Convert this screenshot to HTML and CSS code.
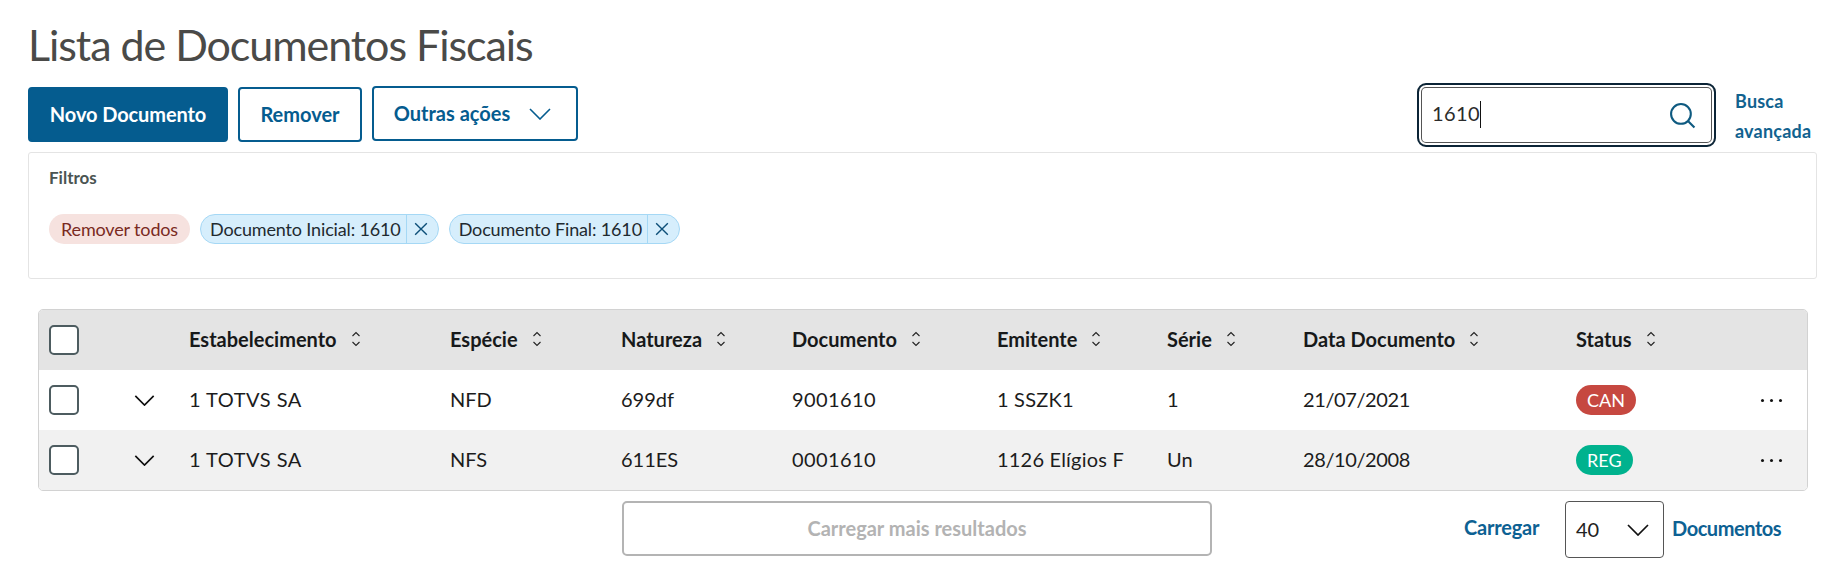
FILE: index.html
```html
<!DOCTYPE html>
<html lang="pt-BR">
<head>
<meta charset="utf-8">
<title>Lista de Documentos Fiscais</title>
<link rel="stylesheet" href="styles.css">
</head>
<body>
<main class="page">
  <h1 class="title">Lista de Documentos Fiscais</h1>
  <div class="toolbar">
    <div class="actions">
      <button class="btn btn-primary">Novo Documento</button>
      <button class="btn btn-outline">Remover</button>
      <button class="btn btn-outline btn-more"><span>Outras ações</span>
        <svg class="chev-blue" viewBox="0 0 22 12"><path d="M1 1l10 10L21 1"/></svg>
      </button>
    </div>
    <div class="search-area">
      <div class="search">
        <span class="search-value">1610</span><span class="caret"></span>
        <svg class="search-icon" viewBox="0 0 26 26"><circle cx="11.5" cy="11.5" r="9.5"/><path d="M18.5 18.5l6 6"/></svg>
      </div>
      <a class="advanced">Busca<br>avançada</a>
    </div>
  </div>
  <section class="filters">
    <div class="filters-label">Filtros</div>
    <div class="chips">
      <span class="chip chip-clear">Remover todos</span>
      <span class="chip chip-filter"><span class="chip-text">Documento Inicial: 1610</span><span class="chip-close"><svg viewBox="0 0 12 12"><path d="M1 1l10 10M11 1L1 11"/></svg></span></span>
      <span class="chip chip-filter"><span class="chip-text">Documento Final: 1610</span><span class="chip-close"><svg viewBox="0 0 12 12"><path d="M1 1l10 10M11 1L1 11"/></svg></span></span>
    </div>
  </section>
  <section class="table">
    <div class="row row-head">
      <div class="cell-select"><span class="check"></span></div>
      <div class="th">Estabelecimento<svg class="sort" viewBox="0 0 10 16"><path d="M1.5 5L5 1.5 8.5 5M1.5 11L5 14.5 8.5 11"/></svg></div>
      <div class="th">Espécie<svg class="sort" viewBox="0 0 10 16"><path d="M1.5 5L5 1.5 8.5 5M1.5 11L5 14.5 8.5 11"/></svg></div>
      <div class="th">Natureza<svg class="sort" viewBox="0 0 10 16"><path d="M1.5 5L5 1.5 8.5 5M1.5 11L5 14.5 8.5 11"/></svg></div>
      <div class="th">Documento<svg class="sort" viewBox="0 0 10 16"><path d="M1.5 5L5 1.5 8.5 5M1.5 11L5 14.5 8.5 11"/></svg></div>
      <div class="th">Emitente<svg class="sort" viewBox="0 0 10 16"><path d="M1.5 5L5 1.5 8.5 5M1.5 11L5 14.5 8.5 11"/></svg></div>
      <div class="th">Série<svg class="sort" viewBox="0 0 10 16"><path d="M1.5 5L5 1.5 8.5 5M1.5 11L5 14.5 8.5 11"/></svg></div>
      <div class="th">Data Documento<svg class="sort" viewBox="0 0 10 16"><path d="M1.5 5L5 1.5 8.5 5M1.5 11L5 14.5 8.5 11"/></svg></div>
      <div class="th">Status<svg class="sort" viewBox="0 0 10 16"><path d="M1.5 5L5 1.5 8.5 5M1.5 11L5 14.5 8.5 11"/></svg></div>
      <div></div>
    </div>
    <div class="row">
      <div class="cell-select"><span class="check"></span><svg class="chev-row" viewBox="0 0 22 12"><path d="M1 1l10 10L21 1"/></svg></div>
      <div class="wide">1 TOTVS SA</div><div>NFD</div><div>699df</div><div class="digits">9001610</div><div class="soft">1 SSZK1</div><div>1</div><div class="num">21/07/2021</div>
      <div class="cell-tag"><span class="tag tag-can">CAN</span></div>
      <div class="more"><i></i><i></i><i></i></div>
    </div>
    <div class="row row-alt">
      <div class="cell-select"><span class="check"></span><svg class="chev-row" viewBox="0 0 22 12"><path d="M1 1l10 10L21 1"/></svg></div>
      <div class="wide">1 TOTVS SA</div><div>NFS</div><div>611ES</div><div class="digits">0001610</div><div class="soft">1126 Elígios F</div><div>Un</div><div class="num">28/10/2008</div>
      <div class="cell-tag"><span class="tag tag-reg">REG</span></div>
      <div class="more"><i></i><i></i><i></i></div>
    </div>
  </section>
  <div class="footer">
    <button class="load-more">Carregar mais resultados</button>
    <div class="pager">
      <span class="pager-label pager-load">Carregar</span>
      <div class="select"><span class="select-value">40</span><svg class="chev-select" viewBox="0 0 22 12"><path d="M1 1l10 10L21 1"/></svg></div>
      <span class="pager-label pager-docs">Documentos</span>
    </div>
  </div>
</main>
</body>
</html>
```

FILE: styles.css
```css
* { box-sizing: border-box; }
html, body { margin: 0; background: #fff; }
body { font-family: Lato, "Open Sans", sans-serif; color: #1c1c1c; width: 1839px; height: 584px; overflow: hidden; }
svg { fill: none; stroke: currentColor; display: block; }
button { font-family: inherit; cursor: pointer; }

.page { display: flex; flex-direction: column; }
.title { margin: 0; padding: 21px 0 0 28px; height: 83px; font-size: 43px; line-height: 48px; font-weight: 400; letter-spacing: -1.05px; color: #4a4a48; }

.toolbar { display: flex; justify-content: space-between; align-items: center; height: 63px; padding: 0 21px 0 28px; margin-bottom: 6px; }
.actions { display: flex; align-items: center; gap: 10px; }
.btn { height: 55px; border-radius: 4px; font-size: 20px; font-weight: 700; border: 2px solid #055c8f; padding: 0 0 2px; }
.btn-primary { width: 200px; background: #055c8f; color: #fff; letter-spacing: -0.1px; }
.btn-outline { background: #fff; color: #055c8f; width: 124px; }
.btn-more { width: 206px; margin-top: -2px; display: flex; align-items: center; justify-content: center; gap: 19px; padding-right: 5px; }
.chev-blue { width: 22px; height: 12px; stroke-width: 1.6; margin-top: 2px; }

.search-area { display: flex; align-items: center; gap: 19px; }
.search { position: relative; width: 299px; height: 64px; border: 2px solid #0b2436; border-radius: 9px; padding: 0 12px 3px 13px; display: flex; align-items: center; box-shadow: inset 0 0 0 2px #fff, inset 0 0 0 3px #555; }
.search-value { font-size: 20px; letter-spacing: 0.4px; color: #2b2b2b; }
.caret { width: 1px; height: 27px; background: #111; margin-top: 3px; }
.search-icon { position: absolute; right: 18px; top: 17px; width: 27px; height: 27px; color: #0e5a80; stroke-width: 2; }
.advanced { width: 83px; margin-top: 2px; font-size: 18px; line-height: 30px; font-weight: 700; letter-spacing: 0.2px; color: #11628f; }

.filters { margin: 0 22px 0 28px; height: 127px; border: 1px solid #e4e4e4; border-radius: 3px; padding: 15px 20px 0; }
.filters-label { font-size: 17px; line-height: 20px; font-weight: 700; color: #4a5452; }
.chips { display: flex; gap: 10px; margin-top: 26px; }
.chip { height: 30px; border-radius: 15px; font-size: 18px; letter-spacing: -0.15px; display: flex; align-items: center; }
.chip-clear { width: 141px; justify-content: center; background: #f6e2df; color: #7a2a22; }
.chip-filter { background: #d6eefc; border: 1px solid #a5d8f5; color: #1f2a30; padding-left: 9px; }
.chip-text { white-space: nowrap; padding-right: 5px; }
.chip-close { width: 32px; height: 28px; border-left: 1px solid #a5d8f5; display: flex; align-items: center; justify-content: center; color: #0d4f78; padding-right: 2px; }
.chip-close svg { width: 14px; height: 14px; stroke-width: 1.2; }

.table { margin: 30px 31px 0 38px; border: 1px solid #d2d2d2; border-radius: 5px; overflow: hidden; font-size: 20px; }
.row { display: grid; grid-template-columns: 150px 261px 171px 171px 205px 170px 136px 273px 150px 1fr; align-items: center; height: 60px; background: #fff; }
.row > div:not(.cell-select):not(.more):not(.cell-tag) { padding-bottom: 2px; }
.row-head { background: #e4e4e4; font-weight: 700; color: #17191a; }
.row-alt { background: #f1f1f1; }
.th { display: flex; align-items: center; gap: 14px; }
.num { letter-spacing: -0.4px; }
.digits { letter-spacing: 0.4px; }
.soft { letter-spacing: 0.2px; }
.wide { letter-spacing: 0.5px; }
.sort { width: 10px; height: 16px; stroke-width: 1.1; color: #222; }
.cell-select { display: flex; align-items: center; padding-left: 10px; }
.check { width: 30px; height: 30px; border: 2px solid #4d5c60; border-radius: 5px; background: #fff; }
.chev-row { width: 21px; height: 11px; margin-left: 55px; stroke-width: 1.8; color: #111; }
.tag { display: block; width: fit-content; height: 30px; line-height: 30px; border-radius: 15px; padding: 0 11px; color: #fff; font-size: 18px; }
.tag-can { background: #c64840; }
.tag-reg { background: #00b28e; }
.more { display: flex; gap: 6px; justify-content: flex-end; padding-right: 25px; }
.more i { width: 3px; height: 3px; border-radius: 50%; background: #111; }

.footer { display: flex; align-items: flex-start; margin-top: 10px; padding-left: 622px; }
.load-more { width: 590px; height: 55px; border: 2px solid #b4b4b4; border-radius: 5px; background: #fff; color: #b3b3b3; font-size: 20px; font-weight: 700; padding: 0 0 2px; }
.pager { display: flex; align-items: center; margin-left: 252px; }
.pager-label { font-size: 20px; font-weight: 700; color: #0d6193; }
.pager-load { width: 101px; margin-top: -6px; letter-spacing: -0.2px; }
.pager-docs { margin-left: -1px; margin-top: -3px; letter-spacing: -0.45px; }
.select { width: 99px; height: 57px; border: 1px solid #555; border-radius: 4px; display: flex; align-items: center; justify-content: space-between; padding: 0 14px 0 10px; margin-right: 9px; font-size: 20px; color: #222; }
.select-value { margin-top: -1px; }
.chev-select { width: 22px; height: 12px; stroke-width: 1.7; color: #111; }
```
